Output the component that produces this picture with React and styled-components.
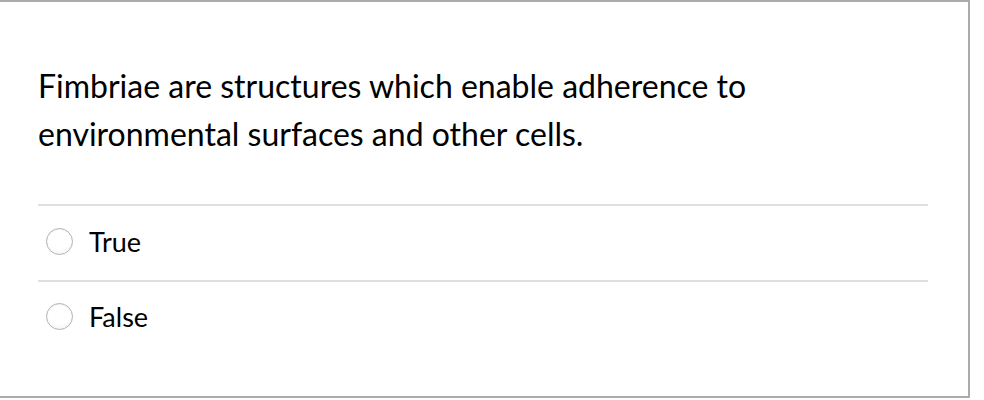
import React from 'react';
import styled, { createGlobalStyle } from 'styled-components';

const GlobalStyle = createGlobalStyle`
  html, body {
    margin: 0;
    padding: 0;
    background: #fff;
  }
  body {
    font-family: Lato, "Liberation Sans", sans-serif;
    color: #000;
  }
`;

const Card = styled.div`
  box-sizing: border-box;
  width: 972px;
  height: 398px;
  margin-left: -2px;
  border: 2px solid #ababab;
  background: #fff;
  padding: 60px 40px 0 38px;
`;

const Question = styled.p`
  margin: 0;
  font-size: 32px;
  line-height: 48px;
  max-width: 800px;
`;

const Answers = styled.div`
  margin-top: 46px;
  width: 890px;
  border-top: 2px solid #e0e0e0;
`;

const Answer = styled.label`
  display: flex;
  align-items: center;
  gap: 16px;
  height: 74px;
  padding-left: 8px;
  padding-bottom: 4px;
  box-sizing: border-box;
  font-size: 27px;
  border-top: ${({ first }) => (first ? 'none' : '2px solid #e0e0e0')};
`;

const Radio = styled.span`
  box-sizing: border-box;
  flex: none;
  width: 27px;
  height: 27px;
  border-radius: 50%;
  border: 1.5px solid #b3b3b3;
  background: radial-gradient(circle at 50% 35%, #fff 55%, #ededed 100%);
  box-shadow: inset 0 1px 1px rgba(0, 0, 0, 0.06);
`;

export default function App() {
  return (
    <>
      <GlobalStyle />
      <Card>
        <Question>
          Fimbriae are structures which enable adherence to environmental surfaces and other cells.
        </Question>
        <Answers>
          <Answer first>
            <Radio />
            True
          </Answer>
          <Answer>
            <Radio />
            False
          </Answer>
        </Answers>
      </Card>
    </>
  );
}
